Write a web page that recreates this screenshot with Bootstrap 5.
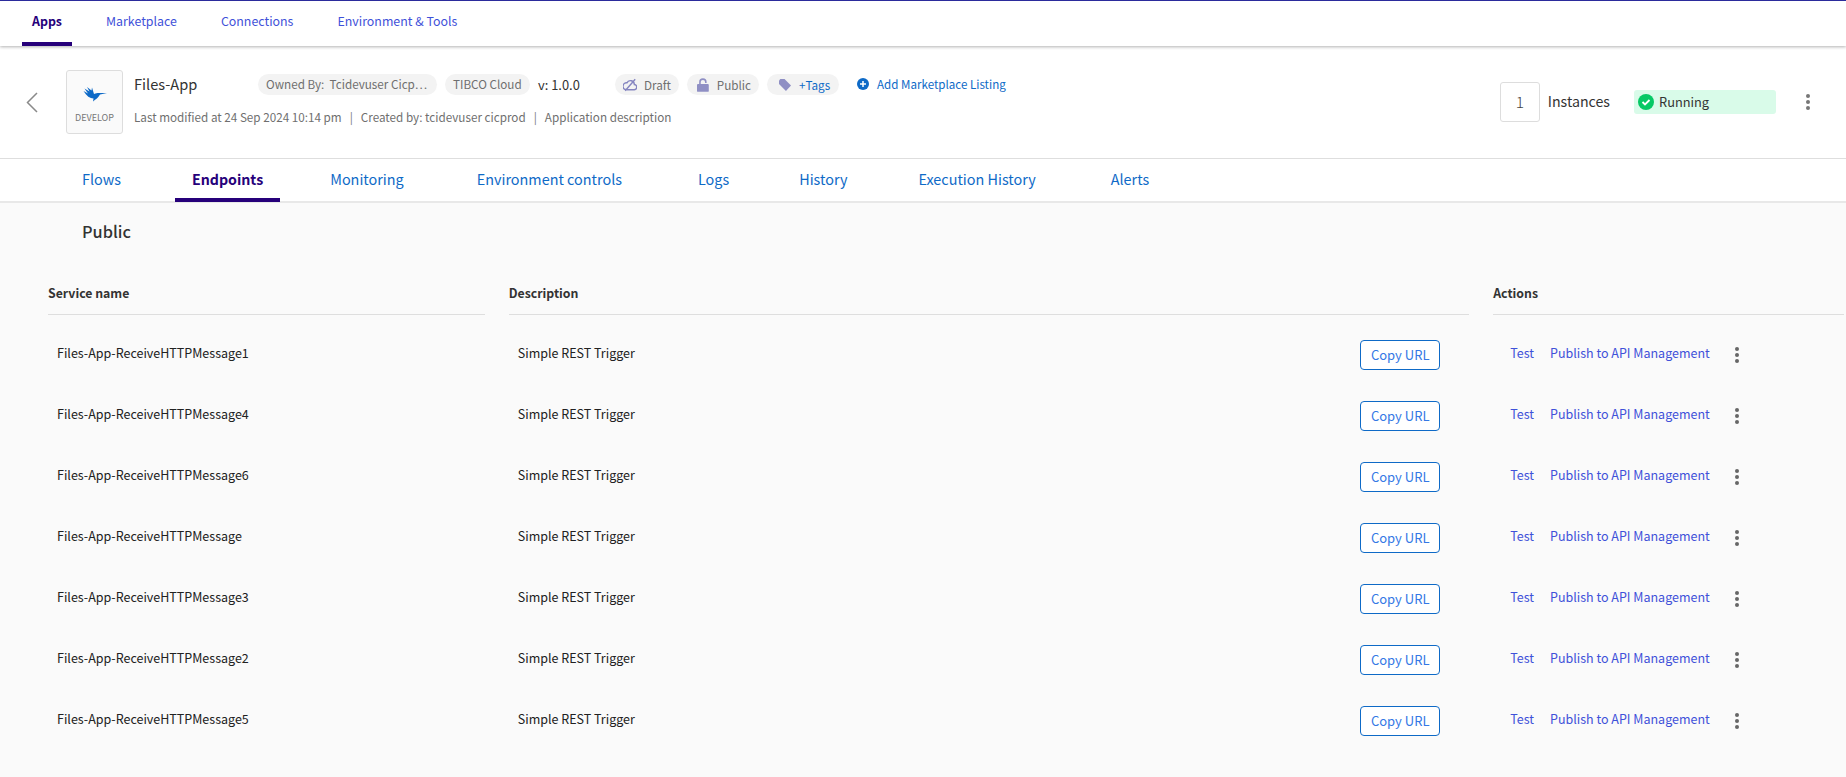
<!DOCTYPE html>
<html lang="en">
<head>
    <meta charset="UTF-8">
    <title>Files-App - Endpoints</title>
    <link href="https://cdn.jsdelivr.net/npm/bootstrap@5.3.2/dist/css/bootstrap.min.css" rel="stylesheet">
    <style>
        body {
            background-color: #fafafa;
            color: #212121;
            font-family: "Noto Sans CJK SC", "Noto Sans", sans-serif;
            font-size: 12.5px;
            height: 777px;
            overflow: hidden;
        }

        a { text-decoration: none; }

        .top-bar {
            height: 46px;
            background: #fff;
            border-top: 1px solid #2b2b9c;
            box-shadow: 0 1px 3px rgba(0, 0, 0, .3);
            padding-left: 22px;
            gap: 24px;
            position: relative;
        }

        .top-link {
            padding: 0 10px;
            line-height: 40px;
            height: 45px;
            font-size: 12.4px;
            color: #3f51d9;
            border-bottom: 4px solid transparent;
        }

        .top-link.is-on {
            color: #26007a;
            font-weight: 700;
            border-bottom-color: #26007a;
        }

        .app-head {
            height: 113px;
            background: #fff;
            border-bottom: 1px solid #dedede;
            padding: 24px 0 0 26px;
        }

        .back-btn { width: 12px; margin-top: 22px; margin-right: 28px; }

        .logo-box {
            width: 57px;
            height: 64px;
            border: 1px solid #ddd;
            border-radius: 3px;
            background: #fafafa;
            margin-right: 11px;
            color: #777;
            font-size: 9px;
        }

        .logo-label { margin-top: 9px; }

        .app-name { font-size: 14.6px; width: 124px; color: #333; padding-bottom: 2px; }

        .meta-pill {
            height: 21px;
            line-height: 20px;
            border-radius: 11px;
            background: #f3f3f3;
            color: #6f6f6f;
            font-size: 11.7px;
            padding: 0 8px;
            white-space: nowrap;
        }

        .pill-owner { width: 179px; }
        .pill-cloud { width: 85px; }
        .pill-draft { width: 64px; gap: 7px; }
        .pill-public { width: 72px; padding-left: 10px; }
        .pill-tags { width: 72px; padding-left: 12px; color: #0e6ac7; }

        .meta-row { height: 21px; margin-top: 4px; }
        .sub-row { color: #6f6f6f; font-size: 11.7px; margin-top: 13px; }
        .sub-sep { margin: 0 8px; color: #777; }

        .ver-text { width: 77px; font-size: 12.9px; color: #333; }
        .add-link { color: #0e6ac7; font-size: 11.6px; margin-left: 18px; }

        .head-right { padding-top: 12px; }

        .count-box {
            width: 40px;
            height: 40px;
            border: 1px solid #ddd;
            border-radius: 3px;
            font-size: 15.5px;
            font-weight: 300;
            color: #444;
        }

        .count-label { font-size: 14.2px; color: #333; }

        .state-pill {
            width: 142px;
            height: 24px;
            background: #d9fbe9;
            border-radius: 3px;
            padding-left: 4px;
            gap: 5px;
            font-size: 12.8px;
            color: #333;
        }

        .head-kebab { margin: 0 35px 0 29px; }

        .sub-tabs {
            height: 44px;
            background: #fff;
            border-bottom: 2px solid #e8e8e8;
            padding-left: 65px;
            gap: 38px;
        }

        .sub-tab {
            padding: 0 17px;
            height: 43px;
            line-height: 40px;
            font-size: 14.4px;
            color: #0e6ac7;
            border-bottom: 4px solid transparent;
        }

        .sub-tab.is-on {
            color: #26007a;
            font-size: 14.2px;
            font-weight: 700;
            border-bottom-color: #26007a;
        }

        .sub-tab:nth-child(2) { margin-left: -1px; }
        .sub-tab:nth-child(3) { margin-left: -5px; }
        .sub-tab:nth-child(4) { margin-left: 1px; }
        .sub-tab:nth-child(5) { margin-left: 4px; }
        .sub-tab:nth-child(6) { margin-left: -2px; }
        .sub-tab:nth-child(7) { margin-left: -1px; }
        .sub-tab:nth-child(8) { margin-left: 3px; }

        .section-title {
            font-size: 16.3px;
            font-weight: 500;
            color: #333;
            padding: 16px 0 0 82px;
            height: 64px;
        }

        .ep-table { padding: 0 2px 0 48px; }
        .ep-row { gap: 24px; height: 61px; }
        .ep-name { width: 437px; padding-left: 9px; }
        .ep-desc { width: 961px; padding: 0 29px 0 9px; }
        .ep-acts { width: 351px; padding-left: 17px; }
        .ep-text { padding-bottom: 2px; }

        .ep-row.ep-head { height: 48px; margin-bottom: 9px; }
        .ep-head > div {
            border-bottom: 1px solid #dedede;
            font-weight: 700;
            padding: 4px 0 0 0;
            color: #333;
            font-size: 12.3px;
            line-height: 44px;
        }

        .copy-btn {
            width: 80px;
            height: 30px;
            padding: 0;
            font-size: 13px;
            color: #3478e5;
            background: #fff;
            border: 1px solid #0e6ac7;
            border-radius: 4px;
        }

        .act-link { color: #3f51d9; }
        .kebab { width: 6px; }
    </style>
</head>
<body>

    <nav class="top-bar d-flex">
        <a class="top-link is-on" href="#">Apps</a>
        <a class="top-link" href="#">Marketplace</a>
        <a class="top-link" href="#">Connections</a>
        <a class="top-link" href="#">Environment &amp; Tools</a>
    </nav>

    <header class="app-head d-flex">
        <div class="back-btn">
            <svg width="12" height="21" viewBox="0 0 12 21"><path d="M11 1 1.500 10.500 11 20" fill="none" stroke="#8a8a8a" stroke-width="1.500"/></svg>
        </div>
        <div class="logo-box d-flex flex-column align-items-center">
            <svg class="mt-3" width="24" height="15" viewBox="0 0 24 15"><path d="M0.500 4 5 6.500 1.500 1.500 6.500 4.500 4 0 8.500 3.500 9 0.500 11 7C13 6 14 6 16 6L24 6 17 7.500C15 11 13 12 10 14.500L10.500 11.500C7 11.500 3.500 9 0.500 4z" fill="#0e6ac7"/></svg>
            <span class="logo-label">DEVELOP</span>
        </div>
        <div class="flex-grow-1">
            <div class="meta-row d-flex align-items-center">
                <div class="app-name">Files-App</div>
                <span class="meta-pill pill-owner">Owned By:&nbsp; Tcidevuser Cicp…</span>
                <span class="meta-pill pill-cloud ms-2">TIBCO Cloud</span>
                <span class="ver-text ms-2">v: 1.0.0</span>
                <span class="meta-pill pill-draft d-flex align-items-center">
                    <svg width="16" height="14" viewBox="0 0 16 14"><path d="M3.500 12.500h9a3 3 0 0 0 .5-6A4.500 4.500 0 0 0 4.500 4.500 4 4 0 0 0 3.500 12.500zM2.500 13.500 14 .500" fill="none" stroke="#8585c0" stroke-width="1.600"/></svg>Draft</span>
                <span class="meta-pill pill-public d-flex align-items-center gap-2 ms-2">
                    <svg width="12" height="14" viewBox="0 0 12 14"><path d="M3 7V4a3 3 0 0 1 6 0v1" fill="none" stroke="#8f8fc4" stroke-width="1.600"/><rect y="6" width="12" height="8" rx="1" fill="#8f8fc4"/></svg>Public</span>
                <span class="meta-pill pill-tags d-flex align-items-center gap-2 ms-2">
                    <svg width="12" height="12" viewBox="0 0 13 13"><path d="M0 1.500 1.500 0H6l7 7-5.500 6L0 5.500z" fill="#8f8fc4"/></svg>+Tags</span>
                <a class="add-link d-flex align-items-center gap-2" href="#">
                    <svg width="12" height="12" viewBox="0 0 12 12"><circle cx="6" cy="6" r="6" fill="#0e6ac7"/><path d="M3 6h6M6 3v6" stroke="#fff" stroke-width="1.500"/></svg>Add Marketplace Listing</a>
            </div>
            <div class="sub-row">Last modified at 24 Sep 2024 10:14 pm<span class="sub-sep">|</span>Created by: tcidevuser cicprod<span class="sub-sep">|</span>Application description</div>
        </div>
        <div class="head-right d-flex align-items-center align-self-start">
            <div class="count-box d-flex align-items-center justify-content-center">1</div>
            <span class="count-label ms-2">Instances</span>
            <div class="state-pill d-flex align-items-center ms-4">
                <svg width="16" height="16" viewBox="0 0 16 16"><circle cx="8" cy="8" r="8" fill="#06c965"/><path d="m4.500 8 2.500 2.500 4.500-4.500" fill="none" stroke="#fff" stroke-width="1.800"/></svg>
                Running
            </div>
            <svg class="kebab head-kebab" height="16" viewBox="0 0 6 16"><circle cx="3" cy="2" r="2" fill="#777"/><circle cx="3" cy="8" r="2" fill="#777"/><circle cx="3" cy="14" r="2" fill="#777"/></svg>
        </div>
    </header>

    <div class="sub-tabs d-flex">
        <a class="sub-tab" href="#">Flows</a>
        <a class="sub-tab is-on" href="#">Endpoints</a>
        <a class="sub-tab" href="#">Monitoring</a>
        <a class="sub-tab" href="#">Environment controls</a>
        <a class="sub-tab" href="#">Logs</a>
        <a class="sub-tab" href="#">History</a>
        <a class="sub-tab" href="#">Execution History</a>
        <a class="sub-tab" href="#">Alerts</a>
    </div>

    <div class="section-title">Public</div>

    <main class="ep-table" id="epTable">
        <div class="ep-row ep-head d-flex">
            <div class="ep-name">Service name</div>
            <div class="ep-desc">Description</div>
            <div class="ep-acts">Actions</div>
        </div>
    </main>

    <script>
        const services = ["1", "4", "6", "", "3", "2", "5"];
        const table = document.getElementById("epTable");

        services.forEach(function (n) {
            const row = document.createElement("div");
            row.className = "ep-row d-flex align-items-center";
            row.innerHTML = `
                <div class="ep-name"><span class="ep-text d-block">Files-App-ReceiveHTTPMessage${n}</span></div>
                <div class="ep-desc d-flex align-items-center justify-content-between">
                    <span class="ep-text">Simple REST Trigger</span>
                    <button class="btn copy-btn" type="button">Copy URL</button>
                </div>
                <div class="ep-acts d-flex align-items-center">
                    <a class="act-link ep-text" href="#">Test</a>
                    <a class="act-link ep-text ms-3" href="#">Publish to API Management</a>
                    <svg class="kebab ms-4" height="16" viewBox="0 0 6 16"><circle cx="3" cy="2" r="2" fill="#666"/><circle cx="3" cy="8" r="2" fill="#666"/><circle cx="3" cy="14" r="2" fill="#666"/></svg>
                </div>`;
            table.appendChild(row);
        });
    </script>

    <script src="https://cdn.jsdelivr.net/npm/bootstrap@5.3.2/dist/js/bootstrap.bundle.min.js"></script>
</body>
</html>
